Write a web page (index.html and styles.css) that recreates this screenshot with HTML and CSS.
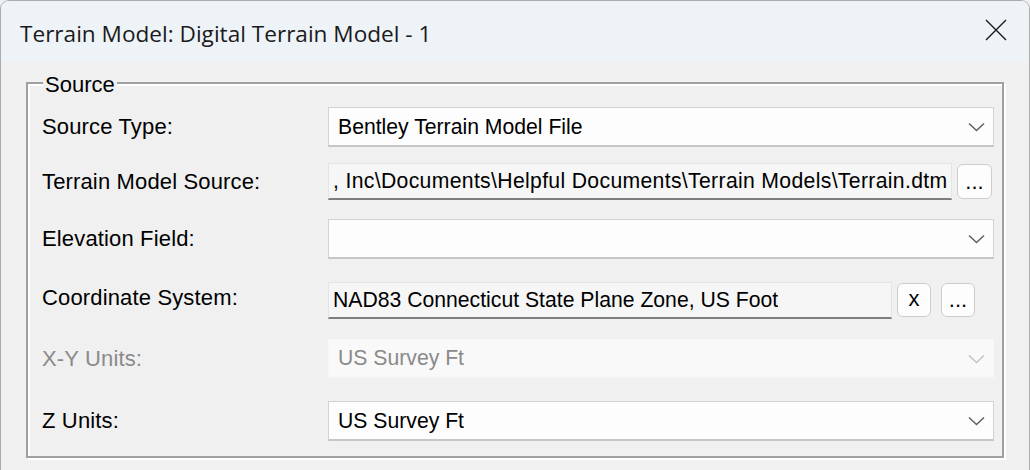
FILE: index.html
```html
<!DOCTYPE html>
<html lang="en">
<head>
<meta charset="utf-8">
<title>Terrain Model</title>
<link rel="stylesheet" href="styles.css">
</head>
<body>
<div class="window">
  <div class="titlebar">
    <span class="title">Terrain Model: Digital Terrain Model - 1</span>
    <span class="close" aria-label="Close">
      <svg width="22" height="22" viewBox="0 0 22 22"><path d="M1 1 L21 21 M21 1 L1 21" stroke="#1b1b1b" stroke-width="1.4" fill="none"/></svg>
    </span>
  </div>
  <div class="client">
    <div class="group">
      <span class="legend">Source</span>

      <div class="row r1">
        <span class="label">Source Type:</span>
        <div class="combo">
          <span class="value">Bentley Terrain Model File</span>
          <svg class="chev" width="17" height="10" viewBox="0 0 17 10"><path d="M1 1.5 L8.5 8.5 L16 1.5" stroke="#606060" stroke-width="1.5" fill="none"/></svg>
        </div>
      </div>

      <div class="row r2">
        <span class="label">Terrain Model Source:</span>
        <div class="pick pick-file">
          <div class="textbox"><span class="value tight path">, Inc\Documents\Helpful Documents\Terrain Models\Terrain.dtm</span></div>
          <span class="btn">...</span>
        </div>
      </div>

      <div class="row r3">
        <span class="label">Elevation Field:</span>
        <div class="combo">
          <span class="value"></span>
          <svg class="chev" width="17" height="10" viewBox="0 0 17 10"><path d="M1 1.5 L8.5 8.5 L16 1.5" stroke="#606060" stroke-width="1.5" fill="none"/></svg>
        </div>
      </div>

      <div class="row r4">
        <span class="label">Coordinate System:</span>
        <div class="pick pick-coord">
          <div class="textbox"><span class="value tight">NAD83 Connecticut State Plane Zone, US Foot</span></div>
          <span class="btn btn-x">x</span>
          <span class="btn btn-more">...</span>
        </div>
      </div>

      <div class="row r5 disabled">
        <span class="label">X-Y Units:</span>
        <div class="combo">
          <span class="value">US Survey Ft</span>
          <svg class="chev" width="17" height="10" viewBox="0 0 17 10"><path d="M1 1.5 L8.5 8.5 L16 1.5" stroke="#c2c2c2" stroke-width="1.5" fill="none"/></svg>
        </div>
      </div>

      <div class="row r6">
        <span class="label">Z Units:</span>
        <div class="combo">
          <span class="value">US Survey Ft</span>
          <svg class="chev" width="17" height="10" viewBox="0 0 17 10"><path d="M1 1.5 L8.5 8.5 L16 1.5" stroke="#606060" stroke-width="1.5" fill="none"/></svg>
        </div>
      </div>
    </div>
  </div>
</div>
</body>
</html>
```

FILE: styles.css
```css
html, body {
  margin: 0;
  padding: 0;
  background: #f0f0f0;
}

body {
  width: 1030px;
  height: 470px;
  overflow: hidden;
}

.window {
  box-sizing: border-box;
  width: 1030px;
  height: 480px;
  border: 1px solid #ababab;
  border-bottom: none;
  border-radius: 9px 9px 0 0;
  background: #f0f0f0;
  overflow: hidden;
}

/* caption bar */
.titlebar {
  height: 61px;
  background: #eef3f8;
  display: flex;
  align-items: center;
  justify-content: space-between;
  padding: 0 22px 0 19px;
}

.title {
  font-family: "Open Sans", "Noto Sans", sans-serif;
  font-size: 22.6px;
  color: #1a1a1a;
  margin-top: 3px;
}

.close {
  display: flex;
  width: 22px;
  height: 22px;
  margin-top: -4px;
}

/* dialog client area */
.client {
  padding: 20px 0 0 25px;
  font-family: "Liberation Sans", Arial, sans-serif;
  font-size: 22px;
  color: #000;
}

/* etched group box */
.group {
  position: relative;
  width: 978px;
  box-sizing: border-box;
  border: 2px solid #a0a0a0;
  box-shadow: inset 2px 2px 0 #ffffff, 2px 2px 0 #ffffff;
  padding: 23px 8px 15px 14px;
}

.legend {
  position: absolute;
  left: 15px;
  top: -10px;
  padding: 0 2px;
  background: #f0f0f0;
  line-height: 22px;
  color: #000;
}

.row {
  display: grid;
  grid-template-columns: 286px 1fr;
  align-items: center;
}

.r1 { height: 40px; }
.r2 { height: 37px; margin-top: 16px; }
.r3 { height: 40px; margin-top: 19px; }
.r4 { height: 37px; margin-top: 23px; }
.r5 { height: 39px; margin-top: 20px; }
.r6 { height: 40px; margin-top: 23px; }

.label {
  white-space: nowrap;
  line-height: 26px;
  letter-spacing: 0.15px;
}

.r4 .label { margin-top: -6px; }

.combo {
  box-sizing: border-box;
  height: 100%;
  background: #fdfdfd;
  border: 1px solid #d3d3d3;
  border-bottom: 2px solid #c6c6c6;
  display: flex;
  align-items: center;
  justify-content: space-between;
  padding: 0 8px 0 9px;
}

.value {
  white-space: nowrap;
  overflow: hidden;
  line-height: 26px;
  font-size: 21.2px;
}

.value.tight { margin-left: -5px; }
.value.path { letter-spacing: 0.33px; }

.chev { flex: none; margin-top: 1px; }

.disabled .label,
.disabled .value { color: #8a8a8a; }

.disabled .combo {
  background: #f9f9f9;
  border-color: #f6f6f6;
}

/* text box with browse buttons */
.pick {
  display: flex;
  align-items: flex-start;
  height: 100%;
}

.pick-file { padding-right: 2px; gap: 5px; }
.pick-coord { padding-right: 19px; gap: 5px; }

.textbox {
  flex: 1;
  min-width: 0;
  box-sizing: border-box;
  height: 37px;
  background: #f6f6f6;
  border: 1px solid #e4e4e4;
  border-bottom: 2px solid #7e7e7e;
  display: flex;
  align-items: center;
  padding-left: 9px;
  overflow: hidden;
}

.btn {
  flex: none;
  box-sizing: border-box;
  width: 35px;
  height: 35px;
  margin-top: 1px;
  border: 1px solid #cdcdcd;
  border-radius: 6px;
  background: #fdfdfd;
  display: flex;
  align-items: center;
  justify-content: center;
  line-height: 26px;
  font-size: 22px;
  color: #000;
}

.pick-coord .btn { width: 34px; height: 34px; }
.btn-more { margin-left: 5px; }
.btn-x { padding-bottom: 2px; }
```
